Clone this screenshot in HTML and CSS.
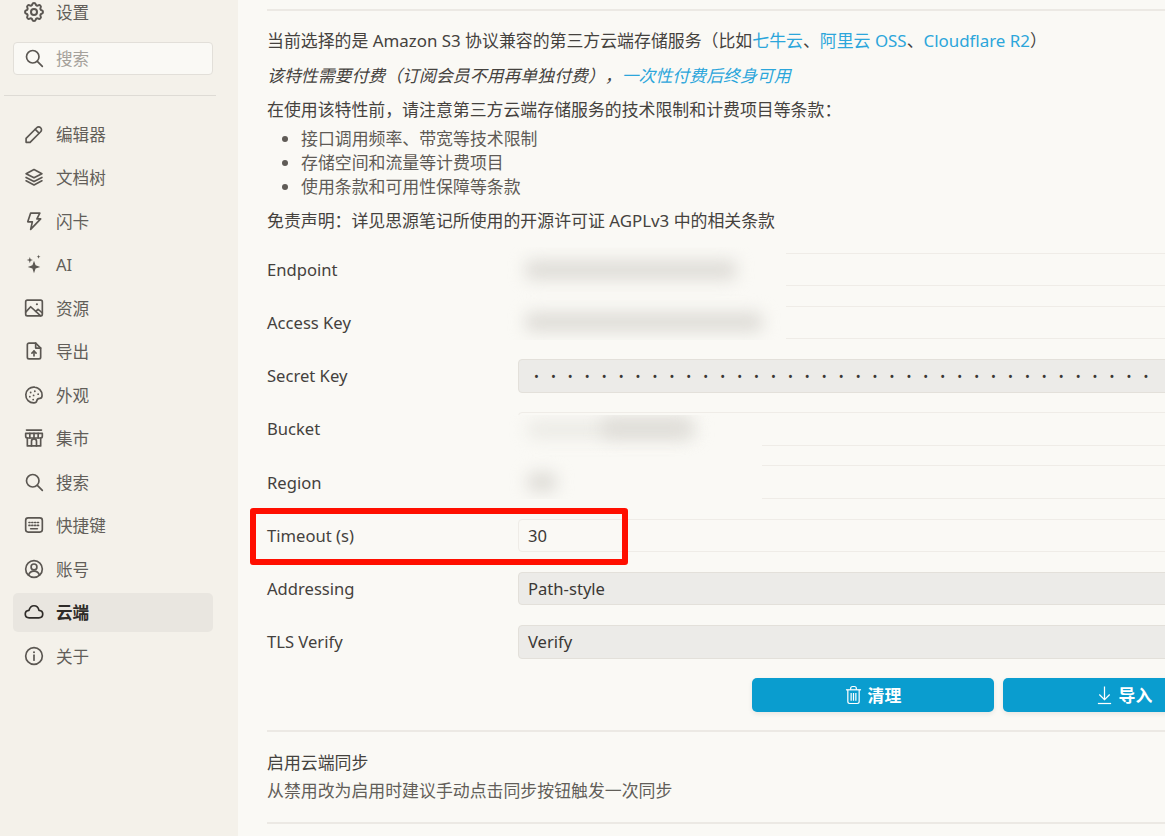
FILE: index.html
```html
<!DOCTYPE html>
<html lang="zh-CN">
<head>
    <meta charset="UTF-8">
    <title>设置 - 云端</title>
    <link rel="stylesheet" href="styles.css">
</head>
<body>
<div class="app">
    <aside class="sidebar">
        <div class="nav-item first">
            <svg class="icon" viewBox="2 2 20 20"><path d="M10.325 4.317c.426-1.756 2.924-1.756 3.35 0a1.724 1.724 0 0 0 2.573 1.066c1.543-.94 3.31.826 2.37 2.37a1.724 1.724 0 0 0 1.065 2.572c1.756.426 1.756 2.924 0 3.35a1.724 1.724 0 0 0-1.066 2.573c.94 1.543-.826 3.31-2.37 2.37a1.724 1.724 0 0 0-2.572 1.065c-.426 1.756-2.924 1.756-3.35 0a1.724 1.724 0 0 0-2.573-1.066c-1.543.94-3.31-.826-2.37-2.37a1.724 1.724 0 0 0-1.065-2.572c-1.756-.426-1.756-2.924 0-3.35a1.724 1.724 0 0 0 1.066-2.573c-.94-1.543.826-3.31 2.37-2.37c1 .608 2.296.07 2.572-1.065z"/><circle cx="12" cy="12" r="3"/></svg>
            <span>设置</span>
        </div>
        <div class="search-box">
            <svg class="icon" viewBox="0 0 24 24"><circle cx="10.5" cy="10.5" r="7.5"/><path d="M16 16l6 6"/></svg>
            <span>搜索</span>
        </div>
        <div class="side-line"></div>
        <nav class="nav">
            <div class="nav-item">
                <svg class="icon" viewBox="0 0 24 24"><path d="M2.500 22h4.800L20 9.300a3.300 3.300 0 0 0-4.800-4.800L2.500 17.200V22z"/><path d="M13.500 6.500l4.500 4.500"/></svg>
                <span>编辑器</span>
            </div>
            <div class="nav-item">
                <svg class="icon" viewBox="0 0 24 24"><path d="M12 3L2.500 8l9.500 5 9.500-5L12 3z"/><path d="M2.500 12.500l9.500 5 9.500-5"/><path d="M2.500 16.500l9.500 5 9.500-5"/></svg>
                <span>文档树</span>
            </div>
            <div class="nav-item">
                <svg class="icon" viewBox="0 0 24 24"><path d="M8 2.500h11l-3.500 7H20L8 22l2-9H4.500L8 2.500z"/></svg>
                <span>闪卡</span>
            </div>
            <div class="nav-item">
                <svg class="icon" viewBox="0 0 24 24"><path class="solid" d="M12 8l1.900 5.600 5.600 1.900-5.600 1.900L12 23l-1.900-5.600-5.600-1.900 5.600-1.900z"/><path class="solid" d="M7 3.500l.9 2.800 2.800.9-2.800.9L7 11l-.9-2.900-2.800-.9 2.800-.9z"/><path class="solid" d="M17.500 1l.6 1.700 1.700.6-1.700.6-.6 1.700-.6-1.700-1.700-.6 1.700-.6z"/></svg>
                <span>AI</span>
            </div>
            <div class="nav-item">
                <svg class="icon" viewBox="0 0 24 24"><rect x="2" y="2.500" width="20" height="19" rx="2"/><path d="M2 17l6-6.500 12 11"/><path d="M14 16l3-2.500 5 4.500"/><circle class="solid" cx="15.500" cy="7.500" r="1.300"/></svg>
                <span>资源</span>
            </div>
            <div class="nav-item">
                <svg class="icon" viewBox="0 0 24 24"><path d="M14 2.500H6a2 2 0 0 0-2 2v15a2 2 0 0 0 2 2h12a2 2 0 0 0 2-2V8.500l-6-6z"/><path d="M14 2.500v6h6"/><path d="M12 18v-6"/><path d="M9.500 14.500L12 12l2.500 2.500"/></svg>
                <span>导出</span>
            </div>
            <div class="nav-item">
                <svg class="icon" viewBox="0 0 24 24"><path d="M13 2.600A9.500 9.500 0 1 0 12 21.500c2.200 0 3-1 3.300-2.500.4-2 1.700-3 3.700-3 1.800 0 2.700-1.400 2.700-3.800 0-5.200-4.200-9.100-8.700-9.600z"/><circle class="solid" cx="8" cy="9" r="1.100"/><circle class="solid" cx="13" cy="7.500" r="1.100"/><circle class="solid" cx="7" cy="14" r="1.100"/><circle class="solid" cx="11.500" cy="12.500" r="1.100"/><circle class="solid" cx="11" cy="17.500" r="1.100"/><circle class="solid" cx="17" cy="11" r="1.100"/></svg>
                <span>外观</span>
            </div>
            <div class="nav-item">
                <svg class="icon" viewBox="0 0 24 24"><path d="M3 2.500h18"/><path d="M2 6.500h20v3.500a2 2 0 0 1-2 2H4a2 2 0 0 1-2-2V6.500z"/><path d="M7 6.500V12M12 6.500V12M17 6.500V12"/><path d="M4 12v9.500h16V12"/><path d="M9 21.500V16a3 3 0 0 1 6 0v5.500"/></svg>
                <span>集市</span>
            </div>
            <div class="nav-item">
                <svg class="icon" viewBox="0 0 24 24"><circle cx="10.500" cy="10.500" r="7.500"/><path d="M16 16l6 6"/></svg>
                <span>搜索</span>
            </div>
            <div class="nav-item">
                <svg class="icon" viewBox="0 0 24 24"><rect x="2" y="3.500" width="20" height="17" rx="3"/><path class="dash" d="M6 9h12M6 12.500h12"/><path d="M8 16.500h8"/></svg>
                <span>快捷键</span>
            </div>
            <div class="nav-item">
                <svg class="icon" viewBox="0 0 24 24"><circle cx="12" cy="12" r="10"/><circle cx="12" cy="9.500" r="3.500"/><path d="M5.500 19.500c.8-3.500 3.300-5 6.500-5s5.700 1.500 6.500 5"/></svg>
                <span>账号</span>
            </div>
            <div class="nav-item active">
                <svg class="icon" viewBox="0 0 24 24"><path d="M6.200 19C3.400 19 1.500 17 1.500 14.500S3.400 10.200 6 10c.9-3.300 3.300-5.500 6-5.500 3.100 0 5.300 2.200 6 5.500 2.600.2 4.500 2 4.500 4.500S20.600 19 17.800 19H6.200z"/></svg>
                <span>云端</span>
            </div>
            <div class="nav-item">
                <svg class="icon" viewBox="0 0 24 24"><circle cx="12" cy="12" r="10"/><path d="M12 11v6"/><circle class="solid" cx="12" cy="7.500" r="1.200"/></svg>
                <span>关于</span>
            </div>
        </nav>
    </aside>

    <main class="main">
        <div class="hr"></div>
        <div class="intro">
            <p>当前选择的是 Amazon S3 协议兼容的第三方云端存储服务（比如<a>七牛云</a>、<a>阿里云 OSS</a>、<a>Cloudflare R2</a>）</p>
            <p><em>该特性需要付费（订阅会员不用再单独付费），<a>一次性付费后终身可用</a></em></p>
            <p>在使用该特性前，请注意第三方云端存储服务的技术限制和计费项目等条款：</p>
            <ul>
                <li>接口调用频率、带宽等技术限制</li>
                <li>存储空间和流量等计费项目</li>
                <li>使用条款和可用性保障等条款</li>
            </ul>
            <p>免责声明：详见思源笔记所使用的开源许可证 AGPLv3 中的相关条款</p>
        </div>

        <div class="form">
            <label>Endpoint</label><div class="field"></div>
            <label>Access Key</label><div class="field"></div>
            <label>Secret Key</label><div class="field filled dots">•••••••••••••••••••••••••••••••••••••</div>
            <label>Bucket</label><div class="field"></div>
            <label>Region</label><div class="field"></div>
            <label>Timeout (s)</label><div class="field">30</div>
            <label>Addressing</label><div class="field filled">Path-style</div>
            <label>TLS Verify</label><div class="field filled">Verify</div>
        </div>

        <div class="actions">
            <button class="btn">
                <svg class="btn-icon" viewBox="0 0 18 20"><path d="M1 4.500h16"/><path d="M6 4.500V3a2 2 0 0 1 2-2h2a2 2 0 0 1 2 2v1.500"/><path d="M3 4.500v12.500a2 2 0 0 0 2 2h8a2 2 0 0 0 2-2V4.500"/><path d="M6.500 8v8M9 8v8M11.500 8v8"/></svg>
                清理
            </button>
            <button class="btn">
                <svg class="btn-icon" viewBox="0 0 18 20"><path d="M9 1v14"/><path d="M3.500 9.500L9 15l5.500-5.500"/><path d="M2 19h14"/></svg>
                导入
            </button>
        </div>

        <div class="hr"></div>
        <div class="sync-row">
            <div class="sync-title">启用云端同步</div>
            <div class="sync-desc">从禁用改为启用时建议手动点击同步按钮触发一次同步</div>
        </div>
        <div class="hr"></div>
    </main>
</div>

<!-- redacted values and the red marker sit on top of the form -->
<div class="mask mask-a">
    <i class="blob blob-endpoint"></i>
    <i class="blob blob-access"></i>
</div>
<div class="mask mask-b">
    <i class="blob blob-bucket"></i>
    <i class="blob blob-bucket-dark"></i>
    <i class="blob blob-region"></i>
</div>
<div class="marker"></div>
</body>
</html>
```

FILE: styles.css
```css
* {
    box-sizing: border-box;
}
html, body {
    margin: 0;
    height: 836px;
    overflow: hidden;
}
body {
    position: relative;
    font-family: "Noto Sans", "Noto Sans CJK SC", sans-serif;
    font-size: 16.6px;
    color: #3b3835;
    background-color: #faf9f5;
    text-spacing-trim: space-all;
}
.app {
    display: flex;
    height: 836px;
}
.sidebar {
    flex: 0 0 238px;
    padding: 0 25px 0 13px;
    background-color: #f4f1ea;
}
.icon {
    flex: 0 0 20px;
    width: 20px;
    height: 20px;
    fill: none;
    stroke: #5b5752;
    stroke-width: 2;
    stroke-linecap: round;
    stroke-linejoin: round;
}
.icon .solid {
    fill: #5b5752;
    stroke: none;
}
.icon .dash {
    stroke-dasharray: 1.2 2.2;
}
.nav-item {
    display: flex;
    align-items: center;
    gap: 12px;
    height: 39.5px;
    margin-bottom: 4px;
    padding-left: 11px;
    border-radius: 5px;
    color: #625e59;
}
.nav-item.first {
    margin-top: -8px;
    margin-bottom: 10.500px;
}
.nav-item.active {
    background-color: #e9e6e0;
    color: #2e2b28;
    font-weight: 700;
}
.nav-item.active .icon {
    stroke: #2e2b28;
}
.search-box {
    display: flex;
    align-items: center;
    gap: 12px;
    height: 32.500px;
    padding-left: 10px;
    border: 1px solid #e2dfd9;
    border-radius: 4px;
    background-color: #faf9f5;
    color: #a5a19b;
}
.side-line {
    height: 1px;
    margin: 20px -3px 18.500px -9px;
    background-color: #dedbd5;
}
.main {
    flex: 1;
    min-width: 0;
    padding: 9px 0 0 29px;
}
.hr {
    height: 2px;
    background-color: #ece9e4;
}
.intro {
    padding-top: 18px;
    font-size: 16.900px;
    line-height: 24px;
    color: #45423e;
}
.intro p {
    margin: 0 0 10.500px;
}
.intro a {
    color: #2ca6db;
}
.intro ul {
    margin: -6px 0 10.500px;
    padding-left: 34px;
    color: #5f5b56;
}
.form {
    display: grid;
    grid-template-columns: 251px 800px;
    row-gap: 19.600px;
    align-items: center;
    margin-top: 19.600px;
}
.form label {
    color: #44413d;
}
.field {
    display: flex;
    align-items: center;
    height: 33.600px;
    padding: 0 9px;
    border: 1px solid #efece7;
    border-radius: 4px;
    white-space: nowrap;
    overflow: hidden;
}
.field.filled {
    border-color: #e3e0da;
    background-color: #ecebe8;
}
.dots {
    font-size: 13px;
    letter-spacing: 12.040px;
    padding-left: 15px;
}
.actions {
    display: flex;
    gap: 9px;
    margin: 19.400px 0 18px 485px;
}
.btn {
    display: flex;
    align-items: center;
    justify-content: center;
    gap: 6px;
    flex: 0 0 242px;
    height: 34px;
    border: 0;
    border-radius: 5px;
    font: inherit;
    font-size: 16.900px;
    font-weight: 700;
    color: #fff;
    background-color: #0a9dcf;
    box-shadow: 0 2px 5px rgba(0, 0, 0, 0.08);
}
.btn-icon {
    width: 17px;
    height: 20px;
    fill: none;
    stroke: #fff;
    stroke-width: 1.300;
}
.sync-row {
    height: 90px;
    padding-top: 17px;
    font-size: 16.900px;
    line-height: 28px;
}
.sync-title {
    color: #45423e;
}
.sync-desc {
    color: #625e59;
}
.mask {
    position: absolute;
    overflow: hidden;
    background-color: #faf9f5;
}
.mask-a {
    left: 499px;
    top: 247px;
    width: 287px;
    height: 93px;
}
.mask-b {
    left: 501px;
    top: 415px;
    width: 261px;
    height: 84px;
}
.blob {
    position: absolute;
    border-radius: 8px;
    background-color: #dfddd8;
    filter: blur(8px);
}
.blob-endpoint {
    left: 26px;
    top: 13px;
    width: 212px;
    height: 20px;
}
.blob-access {
    left: 26px;
    top: 65px;
    width: 238px;
    height: 20px;
}
.blob-bucket {
    left: 26px;
    top: 5px;
    width: 170px;
    height: 19px;
    background-color: #ecebe6;
}
.blob-bucket-dark {
    left: 100px;
    top: 3px;
    width: 90px;
    height: 20px;
}
.blob-region {
    left: 26px;
    top: 57px;
    width: 30px;
    height: 20px;
}
.marker {
    position: absolute;
    left: 250px;
    top: 508px;
    width: 378px;
    height: 57px;
    border: 6px solid #ff0f00;
    border-radius: 3px;
}
```
